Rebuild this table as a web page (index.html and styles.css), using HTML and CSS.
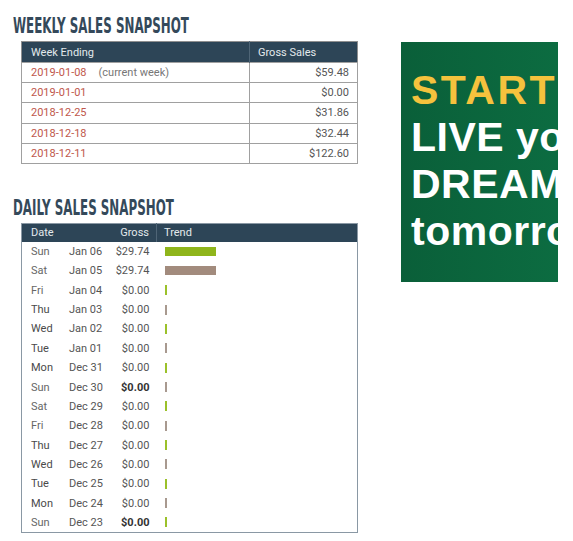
FILE: index.html
```html
<!DOCTYPE html>
<html>
<head>
<meta charset="utf-8">
<link rel="stylesheet" href="styles.css">
</head>
<body>
<div class="page">
  <div class="left">
    <h2 class="title"><span>WEEKLY SALES SNAPSHOT</span></h2>
    <table class="weekly">
      <thead>
        <tr><th class="c1">Week Ending</th><th class="c2">Gross Sales</th></tr>
      </thead>
      <tbody>
        <tr><td><span class="link">2019-01-08</span><span class="note">(current week)</span></td><td class="num">$59.48</td></tr>
        <tr><td><span class="link">2019-01-01</span></td><td class="num">$0.00</td></tr>
        <tr><td><span class="link">2018-12-25</span></td><td class="num">$31.86</td></tr>
        <tr><td><span class="link">2018-12-18</span></td><td class="num">$32.44</td></tr>
        <tr><td><span class="link">2018-12-11</span></td><td class="num">$122.60</td></tr>
      </tbody>
    </table>

    <h2 class="title daily-title"><span>DAILY SALES SNAPSHOT</span></h2>
    <table class="daily">
      <thead>
        <tr><th class="d-day">Date</th><th class="d-date"></th><th class="d-gross">Gross</th><th class="d-trend">Trend</th></tr>
      </thead>
      <tbody>
        <tr><td class="day light">Sun</td><td>Jan 06</td><td class="num">$29.74</td><td><span class="bar g" style="width:51px"></span></td></tr>
        <tr><td class="day light">Sat</td><td>Jan 05</td><td class="num">$29.74</td><td><span class="bar b" style="width:51px"></span></td></tr>
        <tr><td class="day light">Fri</td><td>Jan 04</td><td class="num">$0.00</td><td><span class="bar g"></span></td></tr>
        <tr><td class="day">Thu</td><td>Jan 03</td><td class="num">$0.00</td><td><span class="bar b"></span></td></tr>
        <tr><td class="day">Wed</td><td>Jan 02</td><td class="num">$0.00</td><td><span class="bar g"></span></td></tr>
        <tr><td class="day">Tue</td><td>Jan 01</td><td class="num">$0.00</td><td><span class="bar b"></span></td></tr>
        <tr><td class="day">Mon</td><td>Dec 31</td><td class="num">$0.00</td><td><span class="bar g"></span></td></tr>
        <tr><td class="day light">Sun</td><td>Dec 30</td><td class="num strong">$0.00</td><td><span class="bar b"></span></td></tr>
        <tr><td class="day light">Sat</td><td>Dec 29</td><td class="num">$0.00</td><td><span class="bar g"></span></td></tr>
        <tr><td class="day light">Fri</td><td>Dec 28</td><td class="num">$0.00</td><td><span class="bar b"></span></td></tr>
        <tr><td class="day">Thu</td><td>Dec 27</td><td class="num">$0.00</td><td><span class="bar g"></span></td></tr>
        <tr><td class="day">Wed</td><td>Dec 26</td><td class="num">$0.00</td><td><span class="bar b"></span></td></tr>
        <tr><td class="day">Tue</td><td>Dec 25</td><td class="num">$0.00</td><td><span class="bar g"></span></td></tr>
        <tr><td class="day">Mon</td><td>Dec 24</td><td class="num">$0.00</td><td><span class="bar b"></span></td></tr>
        <tr><td class="day light">Sun</td><td>Dec 23</td><td class="num strong">$0.00</td><td><span class="bar g"></span></td></tr>
      </tbody>
    </table>
  </div>
  <div class="banner">
    <div class="line yellow">START</div>
    <div class="line">LIVE your</div>
    <div class="line">DREAM</div>
    <div class="line">tomorrow</div>
  </div>
</div>
</body>
</html>
```

FILE: styles.css
```css
html, body { margin: 0; padding: 0; background: #fff; }
body { font-family: Roboto, "Liberation Sans", sans-serif; color: #555; }
.page { display: flex; align-items: flex-start; width: 573px; height: 541px; overflow: hidden; }
.left { width: 380px; padding-left: 13px; padding-top: 15px; box-sizing: border-box; }
.title {
  margin: 0; height: 22px; line-height: 22px;
  font-family: "Liberation Sans Narrow", "DejaVu Sans Condensed", sans-serif;
  font-weight: bold; font-size: 22px; color: #34495a; white-space: nowrap;
}
.title span { display: inline-block; transform: scaleX(0.6); transform-origin: left center; }
.daily-title { margin-top: 33px; }

table { border-collapse: collapse; margin-left: 8px; width: 337px; font-size: 11px; }
th { background: #2d4557; color: #e3e9ec; font-weight: normal; text-align: left; }

.weekly { margin-top: 4px; border: 1px solid #8f8f8f; }
.weekly th { height: 20px; padding: 0 0 0 9px; }
.weekly th.c1 { width: 218px; }
.weekly th.c2 { border-left: 1px solid #4f6576; padding-left: 8px; }
.weekly td { height: 19.2px; padding: 0 0 0 9px; border: 1px solid #a0a0a0; }
.weekly td.num { text-align: right; padding: 0 8px 0 0; color: #555; }
.link { color: #c0574b; }
.note { color: #777; margin-left: 12px; }

.daily { margin-top: 4px; border: 1px solid #8a98a4; }
.daily th { height: 18px; padding: 0; }
.daily th.d-day { width: 38px; padding-left: 9px; }
.daily th.d-date { width: 44px; }
.daily th.d-gross { width: 36px; text-align: right; padding-right: 7px; }
.daily th.d-trend { padding-left: 7px; border-left: 1px solid #4f6576; }
.daily td { height: 19.35px; padding: 0; color: #555; }
.daily td.day { padding-left: 9px; color: #4a4a4a; }
.daily td.day.light { color: #666; }
.daily td.num { text-align: right; padding-right: 7px; color: #555; }
.daily td.strong { font-weight: bold; color: #333; }
.daily td:last-child { padding-left: 8px; }
.bar { display: block; width: 2px; height: 10px; }
.bar.g { background: #9bc12a; }
.bar.b { background: #a8998f; }
.bar.b[style] { background: #a28b7d; height: 9px; }
.bar.g[style] { background: #8fb51b; height: 9px; }

.banner {
  margin-top: 42px; margin-left: 21px; width: 157px; height: 240px;
  background: linear-gradient(90deg, #0a5f39 0%, #0c6c41 100%);
  overflow: hidden; box-sizing: border-box; padding: 25px 0 0 10px;
  font-family: "Liberation Sans", Arial, sans-serif; font-weight: bold; font-size: 41px;
  letter-spacing: 0.5px;
  color: #fff; white-space: nowrap;
}
.line { height: 47px; line-height: 47px; }
.yellow { color: #f5c23d; letter-spacing: 2.5px; }
```
